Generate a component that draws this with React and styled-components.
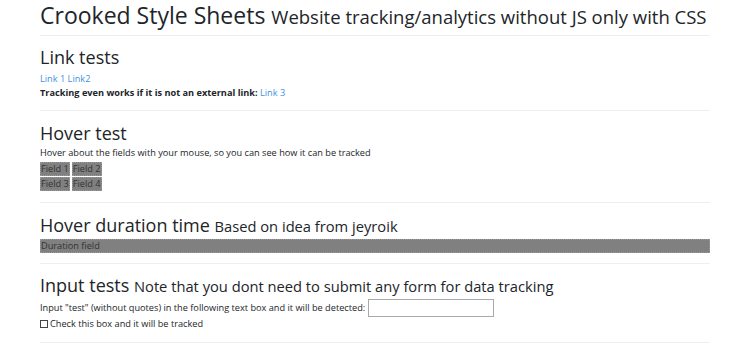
import React from "react";
import styled, { createGlobalStyle } from "styled-components";

const GlobalStyle = createGlobalStyle`
  body {
    margin: 0;
    background: #fff;
    color: #212529;
    font-family: "Open Sans", "Noto Sans", sans-serif;
    font-size: 9.2px;
    line-height: 14px;
  }
`;

const Container = styled.div`
  width: 670px;
  margin: 0 auto;
`;

const Title = styled.h1`
  margin: 0;
  padding: 1px 0 6px;
  font-size: 23px;
  line-height: 28px;
  font-weight: 400;
  white-space: nowrap;
  small {
    font-size: 18.5px;
    line-height: 1;
  }
`;

const Rule = styled.hr`
  margin: 0;
  border: 0;
  border-top: 1px solid #eeeeee;
`;

const Section = styled.section`
  padding: ${(p) => p.$top || 10}px 0 ${(p) => p.$bottom || 10}px;
`;

const Heading = styled.h2`
  margin: 0 0 ${(p) => p.$gap || 0}px;
  font-size: 18px;
  line-height: 22px;
  font-weight: 400;
  white-space: nowrap;
  small {
    font-size: 14.7px;
    line-height: 1;
  }
`;

const Line = styled.p`
  margin: 0;
  font-weight: ${(p) => (p.$bold ? 700 : 400)};
`;

const Link = styled.a`
  color: #4592e2;
  text-decoration: none;
  font-weight: 400;
`;

const FieldRow = styled.div`
  display: flex;
  gap: 2px;
  margin-top: ${(p) => p.$gap || 0}px;
`;

const Field = styled.div`
  background: #808080;
  color: #333;
  border: 1px dotted #9a9a9a;
  padding: 0;
  height: 14px;
  line-height: 12px;
  box-sizing: border-box;
  width: ${(p) => (p.$full ? "100%" : "auto")};
  margin-top: ${(p) => p.$gap || 0}px;
`;

const InputLine = styled.label`
  display: flex;
  align-items: center;
  gap: 3px;
  margin-top: 3px;
`;

const TextBox = styled.input`
  width: 126px;
  height: 18px;
  box-sizing: border-box;
  border: 1px solid #a9a9a9;
  margin: 0;
  padding: 0 2px;
  font: inherit;
`;

const Check = styled.span`
  display: inline-block;
  width: 6px;
  height: 6px;
  border: 1px solid #444;
  margin-right: 2px;
  vertical-align: -1px;
`;

export default function App() {
  return (
    <>
      <GlobalStyle />
      <Container>
        <Title>
          Crooked Style Sheets <small>Website tracking/analytics without JS only with CSS</small>
        </Title>
        <Rule />
        <Section $top={10} $bottom={10}>
          <Heading $gap={4}>Link tests</Heading>
          <Line>
            <Link href="#">Link 1</Link> <Link href="#">Link2</Link>
          </Line>
          <Line $bold>
            Tracking even works if it is not an external link: <Link href="#">Link 3</Link>
          </Line>
        </Section>
        <Rule />
        <Section $top={11} $bottom={11}>
          <Heading $gap={2}>Hover test</Heading>
          <Line>Hover about the fields with your mouse, so you can see how it can be tracked</Line>
          <FieldRow $gap={2}>
            <Field>Field 1</Field>
            <Field>Field 2</Field>
          </FieldRow>
          <FieldRow $gap={1}>
            <Field>Field 3</Field>
            <Field>Field 4</Field>
          </FieldRow>
        </Section>
        <Rule />
        <Section $top={11} $bottom={10}>
          <Heading>
            Hover duration time <small>Based on idea from jeyroik</small>
          </Heading>
          <Field $full $gap={3}>Duration field</Field>
        </Section>
        <Rule />
        <Section $top={10} $bottom={11}>
          <Heading>
            Input tests <small>Note that you dont need to submit any form for data tracking</small>
          </Heading>
          <InputLine>
            Input "test" (without quotes) in the following text box and it will be detected:
            <TextBox type="text" />
          </InputLine>
          <Line>
            <Check />Check this box and it will be tracked
          </Line>
        </Section>
        <Rule />
      </Container>
    </>
  );
}
